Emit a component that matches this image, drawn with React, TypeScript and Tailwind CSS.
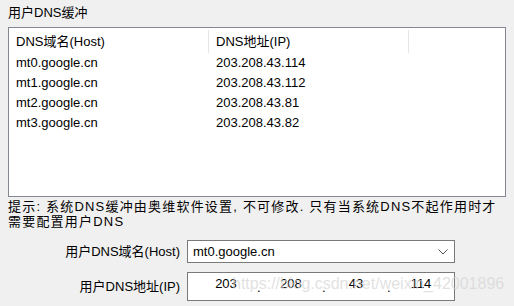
const rows = [
  { host: 'mt0.google.cn', ip: '203.208.43.114' },
  { host: 'mt1.google.cn', ip: '203.208.43.112' },
  { host: 'mt2.google.cn', ip: '203.208.43.81' },
  { host: 'mt3.google.cn', ip: '203.208.43.82' },
];

const ipParts = ['203', '208', '43', '114'];

function Chevron() {
  return (
    <svg width="10" height="6" viewBox="0 0 10 6" fill="none">
      <path d="M0.5 0.5 L5 5 L9.5 0.5" stroke="#5a5a5a" strokeWidth="1" />
    </svg>
  );
}

export default function App() {
  return (
    <div
      className="relative h-[306px] w-[514px] overflow-hidden bg-[#f0f0f0] px-2 pt-[4px] text-[13px] text-black"
      style={{ fontFamily: '"Liberation Sans", "Noto Sans CJK SC", sans-serif' }}
    >
      <div className="h-[18px] leading-[18px]">用户DNS缓冲</div>

      {/* 缓冲列表 */}
      <div className="mt-[5px] h-[170px] border border-[#828790] bg-white">
        <div className="flex h-[25px] items-center pt-[2px]">
          <div className="flex h-full w-[200px] items-center border-r border-[#e5e5e5] pl-[7px]">DNS域名(Host)</div>
          <div className="flex h-full w-[200px] items-center border-r border-[#e5e5e5] pl-[7px]">DNS地址(IP)</div>
        </div>
        {rows.map((r) => (
          <div key={r.host} className="flex h-[20px] items-center">
            <div className="w-[200px] pl-[7px]">{r.host}</div>
            <div className="w-[200px] pl-[7px]">{r.ip}</div>
          </div>
        ))}
      </div>

      <p className="mt-[2px] leading-[15px] tracking-[1.2px]">
        提示: 系统DNS缓冲由奥维软件设置, 不可修改. 只有当系统DNS不起作用时才
        <br />
        需要配置用户DNS
      </p>

      {/* 用户DNS */}
      <div className="mt-[11px] flex flex-col gap-[9px]">
        <div className="flex items-center">
          <div className="w-[172px] text-right">用户DNS域名(Host)</div>
          <div className="ml-[7px] flex h-[23px] w-[268px] items-center justify-between border border-[#7a7a7a] bg-white pl-[5px] pr-[6px]">
            <span>mt0.google.cn</span>
            <Chevron />
          </div>
        </div>
        <div className="flex items-center">
          <div className="w-[172px] text-right">用户DNS地址(IP)</div>
          <div className="ml-[7px] flex h-[29px] w-[268px] items-start border border-[#7a7a7a] bg-white pl-[7px]">
            {ipParts.map((p, i) => (
              <div key={i} className="flex">
                {i > 0 && <span className="w-[3px] pt-[7px] text-center leading-[15px]">.</span>}
                <span className="w-[62px] pt-[3px] text-center leading-[15px]">{p}</span>
              </div>
            ))}
          </div>
        </div>
      </div>

      {/* 水印 */}
      <div className="pointer-events-none absolute left-[232px] top-[275px] text-[16px] leading-[18px] text-[#d4d4d4]/70">
        https://blog.csdn.net/weixin_42001896
      </div>
    </div>
  );
}
